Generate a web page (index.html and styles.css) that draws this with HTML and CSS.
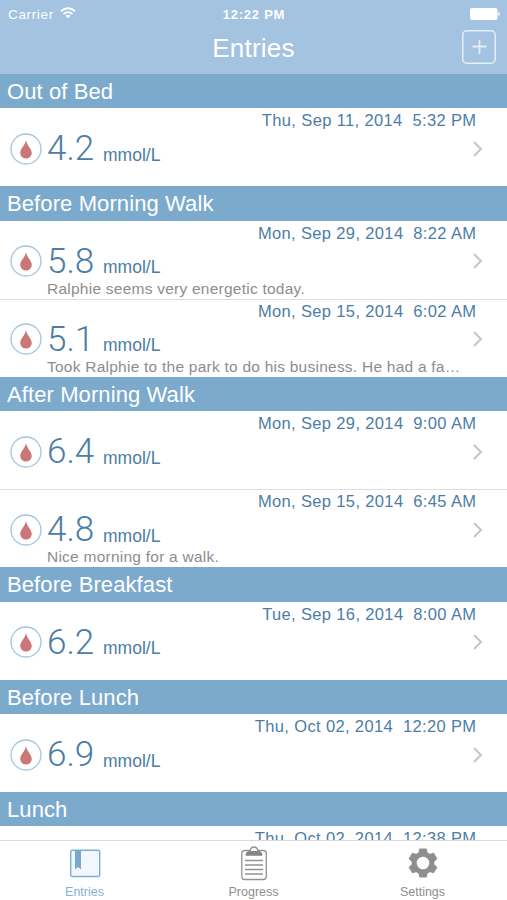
FILE: index.html
```html
<!DOCTYPE html>
<html lang="en">
<head>
<meta charset="utf-8">
<title>Entries</title>
<link rel="stylesheet" href="styles.css">
</head>
<body>
<svg class="defs" width="0" height="0">
  <symbol id="drop" viewBox="0 0 32 32"><circle cx="16" cy="16" r="15" fill="#fff" stroke="#a0c4e2" stroke-width="1.3"/><path d="M16 7C16.6 12 21.8 15.6 21.8 20A5.8 5.6 0 0 1 10.200 20C10.200 15.600 15.400 12 16 7Z" fill="#cb7778"/></symbol>
  <symbol id="chevron" viewBox="0 0 10 16"><path d="M1 1L8 8L1 15" fill="none" stroke="#c5c5c8" stroke-width="2"/></symbol>
</svg>
<div class="app">
  <header class="top">
    <div class="status">
      <div class="carrier"><span>Carrier</span>
        <svg class="wifi" width="16" height="12" viewBox="0 0 16 12"><g fill="none" stroke="#fff" stroke-width="1.8"><path d="M1 4.200Q8-1.800 15 4.200"/><path d="M3.500 7Q8 3.200 12.500 7"/></g><path d="M5.500 8.700Q8 6.900 10.500 8.700L8 11.300Z" fill="#fff"/></svg>
      </div>
      <div class="clock">12:22 PM</div>
      <svg class="battery" width="30" height="12" viewBox="0 0 30 12"><rect width="27.500" height="12" rx="2" fill="#fff"/><path d="M28.300 4Q30 4.500 30 6T28.300 8Z" fill="#fff"/></svg>
    </div>
    <div class="nav">
      <h1>Entries</h1>
      <svg class="add" width="34" height="34" viewBox="0 0 34 34"><g fill="none" stroke="#e3effa" stroke-width="1.500"><rect x=".8" y=".8" width="32.400" height="32.400" rx="4"/><path d="M17.500 10V24M10.500 16.500H24.500" stroke-width="1.800"/></g></svg>
    </div>
  </header>

  <main class="list">
    <h2>Out of Bed</h2>
    <article class="row"><time>Thu, Sep 11, 2014&nbsp; 5:32 PM</time><div class="reading"><svg class="drop"><use href="#drop"/></svg><span class="value">4.2</span><span class="unit">mmol/L</span><svg class="chevron"><use href="#chevron"/></svg></div></article>

    <h2>Before Morning Walk</h2>
    <article class="row"><time>Mon, Sep 29, 2014&nbsp; 8:22 AM</time><div class="reading"><svg class="drop"><use href="#drop"/></svg><span class="value">5.8</span><span class="unit">mmol/L</span><svg class="chevron"><use href="#chevron"/></svg></div><p>Ralphie seems very energetic today.</p></article>
    <article class="row"><time>Mon, Sep 15, 2014&nbsp; 6:02 AM</time><div class="reading"><svg class="drop"><use href="#drop"/></svg><span class="value">5.1</span><span class="unit">mmol/L</span><svg class="chevron"><use href="#chevron"/></svg></div><p>Took Ralphie to the park to do his business. He had a fa…</p></article>

    <h2>After Morning Walk</h2>
    <article class="row"><time>Mon, Sep 29, 2014&nbsp; 9:00 AM</time><div class="reading"><svg class="drop"><use href="#drop"/></svg><span class="value">6.4</span><span class="unit">mmol/L</span><svg class="chevron"><use href="#chevron"/></svg></div></article>
    <article class="row"><time>Mon, Sep 15, 2014&nbsp; 6:45 AM</time><div class="reading"><svg class="drop"><use href="#drop"/></svg><span class="value">4.8</span><span class="unit">mmol/L</span><svg class="chevron"><use href="#chevron"/></svg></div><p>Nice morning for a walk.</p></article>

    <h2>Before Breakfast</h2>
    <article class="row"><time>Tue, Sep 16, 2014&nbsp; 8:00 AM</time><div class="reading"><svg class="drop"><use href="#drop"/></svg><span class="value">6.2</span><span class="unit">mmol/L</span><svg class="chevron"><use href="#chevron"/></svg></div></article>

    <h2>Before Lunch</h2>
    <article class="row"><time>Thu, Oct 02, 2014&nbsp; 12:20 PM</time><div class="reading"><svg class="drop"><use href="#drop"/></svg><span class="value">6.9</span><span class="unit">mmol/L</span><svg class="chevron"><use href="#chevron"/></svg></div></article>

    <h2>Lunch</h2>
    <article class="row"><time>Thu, Oct 02, 2014&nbsp; 12:38 PM</time></article>
  </main>

  <nav class="tabs">
    <a class="tab active">
      <svg width="34" height="36" viewBox="0 0 34 36"><rect x="2.700" y="5.200" width="29" height="26.300" rx="1.500" fill="#f1f7fd" stroke="#7fadd3" stroke-width="1.400"/><path d="M7 5.500H13V24.500L10 22L7 24.500Z" fill="#79a8ce"/></svg>
      <span>Entries</span>
    </a>
    <a class="tab">
      <svg width="34" height="36" viewBox="0 0 34 36"><rect x="4.800" y="5.500" width="24.500" height="29" rx="3" fill="#fff" stroke="#929292" stroke-width="1.300"/><path d="M8 15.500H26M8 20H26M8 24.500H26M8 29H26" stroke="#929292" stroke-width="1.500"/><path d="M13 6.500Q13.500 2 17 2T21 6.500" fill="#fff" stroke="#929292" stroke-width="1.300"/><path d="M8.500 10.700Q8.500 6 13 6H21Q25.500 6 25.500 10.700Z" fill="#858585"/></svg>
      <span>Progress</span>
    </a>
    <a class="tab">
      <svg width="34" height="36" viewBox="0 0 34 36"><g transform="translate(17 18)" fill="#8e8e8e"><circle r="8.800" fill="none" stroke="#8e8e8e" stroke-width="5"/><path id="tooth" d="M-4.800-9L-3.600-14.500H3.600L4.800-9Z"/><use href="#tooth" transform="rotate(60)"/><use href="#tooth" transform="rotate(120)"/><use href="#tooth" transform="rotate(180)"/><use href="#tooth" transform="rotate(240)"/><use href="#tooth" transform="rotate(300)"/></g></svg>
      <span>Settings</span>
    </a>
  </nav>
</div>
</body>
</html>
```

FILE: styles.css
```css
* { box-sizing: border-box; }
body {
  margin: 0;
  font-family: "Liberation Sans", Arial, sans-serif;
  background: #fff;
}
.defs { display: block; height: 0; }
.app {
  width: 507px;
  height: 900px;
  display: flex;
  flex-direction: column;
  overflow: hidden;
}
.top {
  height: 74px;
  flex: none;
  background: #a3c3e1;
  color: #fff;
}
.status {
  height: 28px;
  padding: 0 7px 0 8px;
  display: grid;
  grid-template-columns: 1fr auto 1fr;
  align-items: center;
  font-size: 13.500px;
  letter-spacing: .65px;
}
.carrier { display: flex; align-items: center; gap: 6px; }
.wifi { margin-top: -2px; }
.clock { font-weight: bold; font-size: 13px; letter-spacing: .75px; }
.battery { justify-self: end; }
.nav {
  display: grid;
  grid-template-columns: 1fr auto 1fr;
  align-items: center;
  height: 38px;
  padding: 0 11px;
}
h1 {
  grid-column: 2;
  margin: 2px 0 0;
  font-size: 26px;
  line-height: 36px;
  font-weight: normal;
  letter-spacing: .25px;
}
.add { justify-self: end; }
.list { flex: 1; min-height: 0; overflow: hidden; }
h2 {
  margin: 0;
  height: 34.300px;
  padding-left: 7px;
  background: #7caacd;
  color: #fff;
  font-size: 22px;
  line-height: 36px;
  font-weight: normal;
  letter-spacing: .1px;
}
.row {
  height: 78.100px;
  padding: 2px 31px 0 10px;
  display: flex;
  flex-direction: column;
  color: #4c7da6;
}
.row + .row { border-top: 1px solid #dededf; padding-top: 1px; }
time {
  align-self: flex-end;
  margin-right: -.4px;
  font-size: 16.500px;
  line-height: 20px;
  letter-spacing: .36px;
  white-space: nowrap;
}
.reading { height: 37px; display: flex; align-items: center; }
.drop { width: 32px; height: 32px; flex: none; }
.value {
  width: 51px;
  margin: 1px 0 0 5px;
  font-family: Roboto, "Liberation Sans", sans-serif;
  font-weight: 300;
  font-size: 35px;
  line-height: 38px;
}
.unit { margin: 12px 0 0 5px; font-size: 17.500px; line-height: 20px; }
.chevron { width: 10px; height: 16px; margin-left: auto; margin-right: -7px; }
p {
  margin: 0 0 0 37px;
  font-size: 15.500px;
  line-height: 17px;
  letter-spacing: .24px;
  color: #8d8d8d;
  white-space: nowrap;
}
.tabs {
  flex: none;
  height: 60px;
  display: grid;
  grid-template-columns: repeat(3, 1fr);
  border-top: 1px solid #dcdcdc;
  background: #fff;
}
.tab {
  display: flex;
  flex-direction: column;
  align-items: center;
  padding-top: 4px;
  color: #8e8e8e;
  font-size: 12.500px;
  line-height: 17px;
}
.tab span { margin-top: 3px; }
.tab.active { color: #86b2d8; }
```
